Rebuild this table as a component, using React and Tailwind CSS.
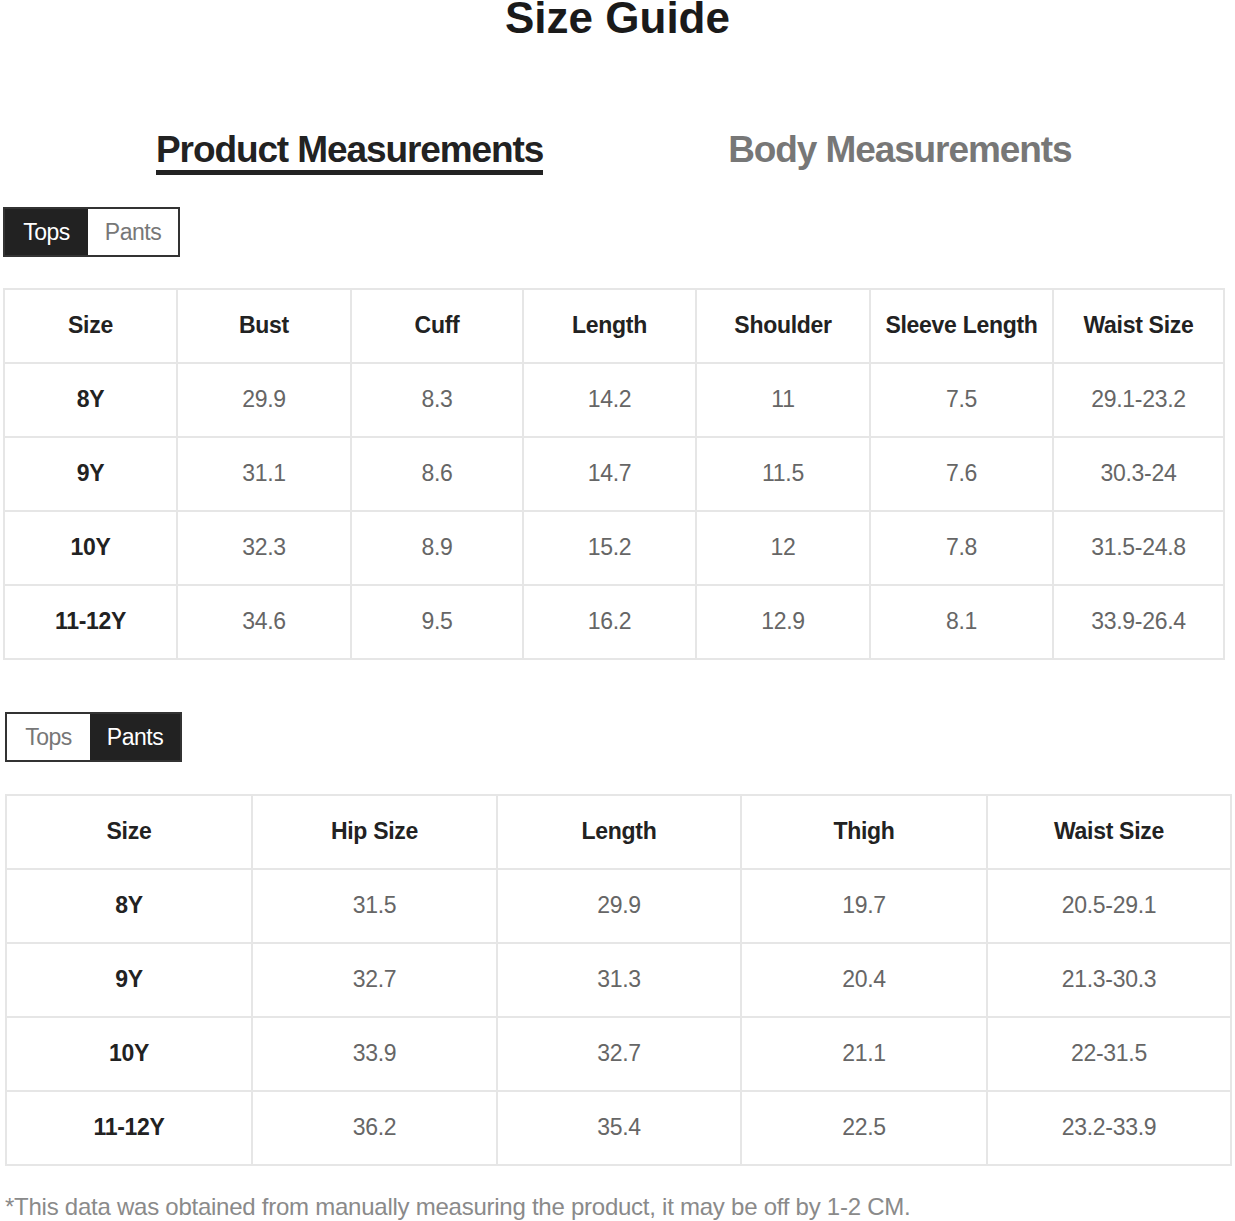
import React from "react";

const topsHead = ["Size", "Bust", "Cuff", "Length", "Shoulder", "Sleeve Length", "Waist Size"];
const topsRows = [
    ["8Y", "29.9", "8.3", "14.2", "11", "7.5", "29.1-23.2"],
    ["9Y", "31.1", "8.6", "14.7", "11.5", "7.6", "30.3-24"],
    ["10Y", "32.3", "8.9", "15.2", "12", "7.8", "31.5-24.8"],
    ["11-12Y", "34.6", "9.5", "16.2", "12.9", "8.1", "33.9-26.4"],
];

const pantsHead = ["Size", "Hip Size", "Length", "Thigh", "Waist Size"];
const pantsRows = [
    ["8Y", "31.5", "29.9", "19.7", "20.5-29.1"],
    ["9Y", "32.7", "31.3", "20.4", "21.3-30.3"],
    ["10Y", "33.9", "32.7", "21.1", "22-31.5"],
    ["11-12Y", "36.2", "35.4", "22.5", "23.2-33.9"],
];

function Toggle({ active }) {
    const on = "bg-[#222222] text-white";
    const off = "bg-white text-[#777777]";
    return (
        <div className="flex h-[50px] w-[177px] border-2 border-[#333333] text-[23px] tracking-[-0.5px]">
            <div className={`flex w-[83px] items-center justify-center ${active == 'tops' ? on : off}`}>Tops</div>
            <div className={`flex flex-1 items-center justify-center ${active == 'pants' ? on : off}`}>Pants</div>
        </div>
    )
}

function Grid({ head, rows, cols, width }) {
    return (
        <div className={`grid ${cols} ${width} grid-rows-[72px_72px_72px_72px_72px] gap-[2px] bg-[#e6e6e6] p-[2px]`}>
            {head.map((h, i) => (
                <div key={'h' + i} className="flex items-center justify-center bg-white pb-[1px] text-[23px] font-bold tracking-[-0.3px] text-[#222222]">{h}</div>
            ))}
            {rows.map((row, r) => row.map((cell, c) => (
                <div key={r + '-' + c} className={`flex items-center justify-center bg-white pb-[1px] text-[23px] tracking-[-0.3px] ${c == 0 ? 'font-bold text-[#222222]' : 'text-[#666666]'}`}>{cell}</div>
            )))}
        </div>
    )
}

export default function App() {
    return (
        <div className="min-h-[1221px] w-[1235px] overflow-hidden bg-white font-['Liberation_Sans',Arial,sans-serif]">
            <h1 className="-mt-[4px] text-center text-[44px] font-bold leading-[44px] text-[#1a1a1a]">Size Guide</h1>

            {/* measurement tabs */}
            <div className="mt-[91px] flex items-start gap-[183px] pl-[154px]">
                <div className="px-[2px]">
                    <p className="text-[37px] font-bold leading-[37px] tracking-[-1.1px] text-[#222222]">Product Measurements</p>
                    <div className="mt-[2px] h-[5px] w-full bg-[#222222]"></div>
                </div>
                <p className="text-[37px] font-bold leading-[37px] tracking-[-1.1px] text-[#777777]">Body Measurements</p>
            </div>

            <div className="ml-[3px] mt-[32px]">
                <Toggle active="tops" />
            </div>
            <div className="ml-[3px] mt-[31px]">
                <Grid head={topsHead} rows={topsRows} width="w-[1222px]" cols="grid-cols-[171px_172px_170px_171px_172px_181px_169px]" />
            </div>

            <div className="ml-[5px] mt-[52px]">
                <Toggle active="pants" />
            </div>
            <div className="ml-[5px] mt-[32px]">
                <Grid head={pantsHead} rows={pantsRows} width="w-[1227px]" cols="grid-cols-[244px_243px_242px_244px_242px]" />
            </div>

            <p className="ml-[5px] mt-[29px] text-[24px] leading-[24px] tracking-[-0.25px] text-[#8a8a8a]">*This data was obtained from manually measuring the product, it may be off by 1-2 CM.</p>
        </div>
    )
}
